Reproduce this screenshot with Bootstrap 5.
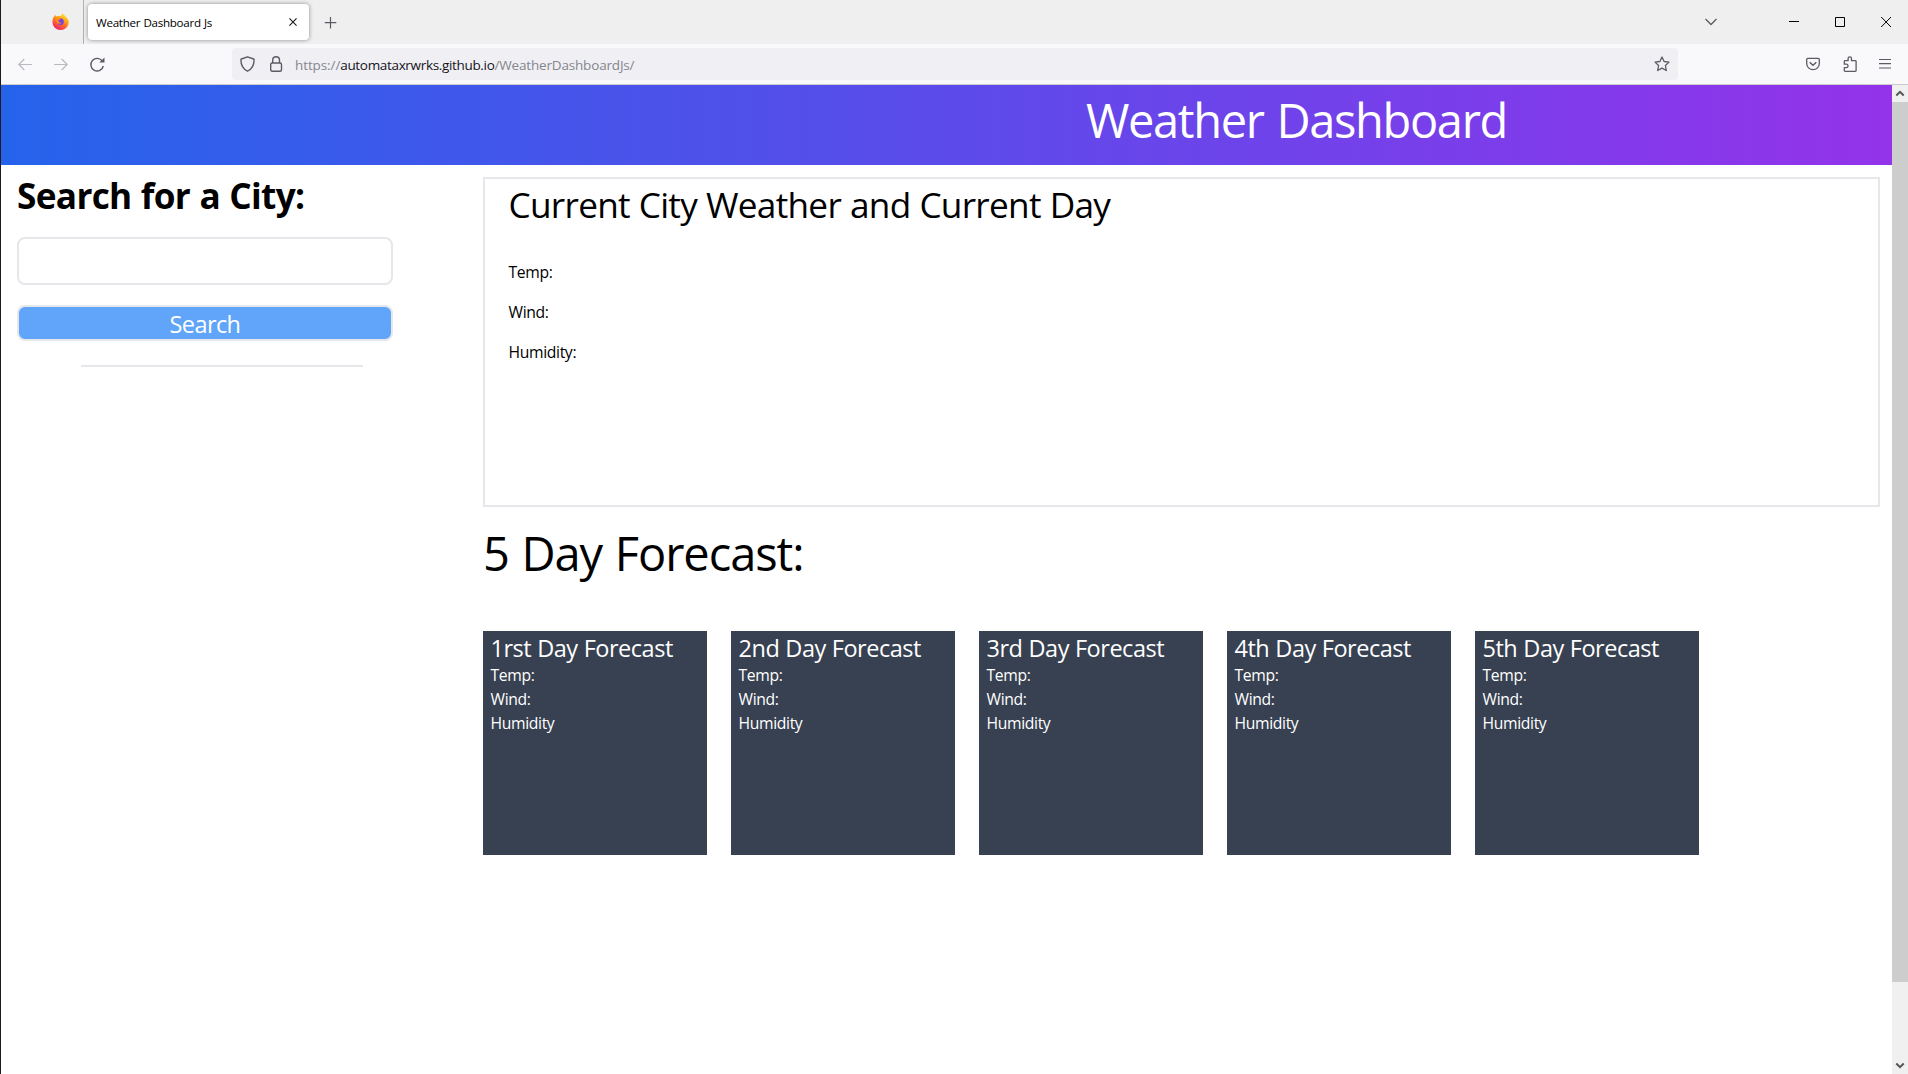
<!DOCTYPE html>
<html lang="en">
<head>
<meta charset="utf-8">
<title>Weather Dashboard Js</title>
<link href="https://cdn.jsdelivr.net/npm/bootstrap@5.3.0/dist/css/bootstrap.min.css" rel="stylesheet">
<style>
body{font-family:"Open Sans","Noto Sans",sans-serif;color:#000;background:#fff}
svg{display:block;flex:none;overflow:visible}
.app-window{height:1074px;border-left:1px solid #1b1b1f}
.tab-strip{height:44px;background:#efefef}
.pin-area{width:83px;border-right:1px solid #b0b0b0;padding:13px 0 0 51px}
.active-tab{width:221px;height:36px;margin:4px 0 0 4px;padding:0 12px 0 8px;border-radius:4px;box-shadow:0 0 4px rgba(0,0,0,.42);font-size:11.6px;letter-spacing:-.28px;word-spacing:.5px}
.active-tab span{padding-top:2px}
.tool-row{height:41px;background:#f9f9fb;border-bottom:1px solid #ccc}
.url-box{width:1446px;height:32px;margin-left:127px;background:#f0f0f4;border-radius:4px;padding:0 8px 0 8px;font-size:13.5px;color:#85858d}
.url-text{margin-left:13px;padding-top:2px}
.url-scheme{letter-spacing:-.1px}.url-host{color:#15141a;letter-spacing:-.33px}.url-path{letter-spacing:-.17px}
.page-head{height:80px;background:linear-gradient(to right,#2563eb,#9333ea);padding:11px 0 0 1085px}
.page-head h1,.forecast-title{font-size:47px;line-height:48px;font-weight:400}
.page-head h1{letter-spacing:-1.35px;word-spacing:2px}
.forecast-title{letter-spacing:-1.05px;word-spacing:1.5px;margin:22px 0 54px}
.side{width:482px;padding:10px 0 0 16px}
.side h2{font-size:35.2px;line-height:40px;font-weight:700;letter-spacing:-.68px;word-spacing:.8px;margin-bottom:22px}
.city-input,.search-btn,.search-btn:hover{width:376px;border:2px solid #e5e7eb;border-radius:8px}
.city-input{height:48px}
.search-btn,.search-btn:hover{height:36px;margin-top:20px;background:#60a5fa;color:#fff;font-size:23.5px;line-height:32px;letter-spacing:-.6px;padding:1px 0 0}
.rule{width:282px;height:2px;background:#e5e7eb;margin:24px 0 0 64px}
.current-box{width:1397px;height:330px;border:2px solid #e5e7eb;margin-top:12px;padding:5px 23.5px}
.current-box h2{font-size:35.2px;line-height:40px;font-weight:400;letter-spacing:-.72px;word-spacing:.5px;margin-bottom:36px}
.reading{font-size:15.7px;line-height:24px;letter-spacing:-.35px}
.day-tile{width:224px;height:224px;background:#374151;color:#fff;padding:1px 7.500px 0}
.day-tile h3{font-size:23.5px;line-height:32px;font-weight:400;letter-spacing:-.48px;word-spacing:.4px}
.day-tile h3 + .reading{margin-top:-1px}
.scroll-track{width:16px;background:#f0f0f0;padding:6px 0 5px}
.scroll-thumb{height:880px;background:#cdcdcd}
</style>
<script src="https://cdn.jsdelivr.net/npm/bootstrap@5.3.0/dist/js/bootstrap.bundle.min.js"></script>
</head>
<body class="overflow-hidden">
<div class="app-window d-flex flex-column">
  <div class="tab-strip d-flex">
    <div class="pin-area">
      <svg width="17" height="17" viewBox="0 0 16 16"><defs><linearGradient id="fx" x1=".8" y1=".1" x2=".3" y2="1"><stop offset="0" stop-color="#ffe226"/><stop offset=".45" stop-color="#ff8a16"/><stop offset="1" stop-color="#f5156c"/></linearGradient></defs><path d="M2 3.200 3 1.800l1.400 1.400 1.800-.6L8.600 3 9.600.2c1 1.100 2.200 1.600 3 3.200 1.600 1 3.200 3 3.200 5.200A7.700 7.400 0 0 1 .4 8.600C.4 6.200 1 4.400 2 3.200z" fill="url(#fx)"/><circle cx="8" cy="8.200" r="3.100" fill="#7542e5"/><path d="M3.500 5.200c1.500-.5 3 .1 4.400.3 0 1-1.700 1.200-1.900 1.700.2 1.500 1.500 2 3 1.500-1 2.300-4.500 1.900-5-.8z" fill="#ff8a16"/></svg>
    </div>
    <div class="active-tab bg-white d-flex align-items-center justify-content-between">
      <span>Weather Dashboard Js</span>
      <svg width="8" height="8" viewBox="0 0 9 9" stroke="#15141a" stroke-width="1.200"><path d="M.5.5l8 8M8.500.5l-8 8"/></svg>
    </div>
    <svg class="ms-3 mt-3" width="12" height="12" viewBox="0 0 12 12" stroke="#5b5b66" stroke-width="1.200"><path d="M5.500 1v11.500M-.2 6.700h11.500"/></svg>
    <div class="d-flex ms-auto" style="padding:16px 17px 0 0">
      <svg width="14" height="12" viewBox="0 0 14 12" fill="none" stroke="#5b5b66" stroke-width="1.300" style="margin-right:71px"><path d="M1.500 3 7 8.500 12.500 3"/></svg>
      <svg width="10" height="12" viewBox="0 0 10 12" stroke="#000" style="margin-right:36px"><path d="M0 5.500h10"/></svg>
      <svg width="10" height="12" viewBox="0 0 10 12" fill="none" stroke="#000" style="margin-right:36px"><path d="M.5 1.500h9v9h-9z"/></svg>
      <svg width="10" height="12" viewBox="0 0 10 12" stroke="#000"><path d="M.2 1l9.800 10M10 1 .2 11"/></svg>
    </div>
  </div>
  <div class="tool-row d-flex align-items-center">
    <svg style="margin-left:17px" width="14" height="12" viewBox="0 0 14 12" fill="none" stroke="#b9b9bf" stroke-width="1.200"><path d="M14 6.500H.8M6.300 1 .8 6.500 6.300 12"/></svg>
    <svg style="margin-left:22px" width="14" height="12" viewBox="0 0 14 12" fill="none" stroke="#b9b9bf" stroke-width="1.200"><path d="M0 6.500h13.200M7.700 1l5.500 5.500L7.700 12"/></svg>
    <svg style="margin-left:22px" width="15" height="15" viewBox="0 0 15 15" fill="none" stroke="#5b5b66" stroke-width="1.400"><path d="M12.400 4.200A6.300 6.300 0 1 0 13.300 9"/><path d="M14.500.6v5H9.300z" fill="#5b5b66" stroke="none"/></svg>
    <div class="url-box d-flex align-items-center">
      <svg width="15" height="16" viewBox="0 0 15 16" fill="none" stroke="#5b5b66" stroke-width="1.400"><path d="M7.500.8 13.600 3q.5.200.5.800c0 5-1.800 9.200-6.600 11.400C2.700 13 .9 8.800.9 3.800Q.9 3.200 1.400 3z" stroke-linejoin="round"/></svg>
      <svg style="margin-left:15px" width="12" height="16" viewBox="0 0 12 16" fill="none" stroke="#5b5b66" stroke-width="1.400"><rect x=".7" y="7" width="10.800" height="8.300" rx="1.500"/><path d="M2.700 7V4.200a3.400 3.400 0 0 1 6.800 0V7"/></svg>
      <div class="url-text text-nowrap"><span class="url-scheme">https://</span><span class="url-host">automataxrwrks.github.io</span><span class="url-path">/WeatherDashboardJs/</span></div>
      <svg class="ms-auto" width="16" height="16" viewBox="0 0 16 16" fill="none" stroke="#5b5b66" stroke-width="1.300" stroke-linejoin="round"><path d="M8 1l2.100 4.500 4.900.6-3.600 3.400.9 5L8 12.100l-4.300 2.400.9-5L1 6.100l4.900-.6z"/></svg>
    </div>
    <svg style="margin-left:128px" width="14" height="14" viewBox="0 0 14 14" fill="none" stroke="#5b5b66" stroke-width="1.300"><path d="M1.800 1.300h10.400q1.100 0 1.100 1.100v4a6.300 6.300 0 0 1-12.600 0v-4q0-1.100 1.100-1.100z"/><path d="M3.700 5.200 7 8.200l3.300-3" stroke-width="1.500"/></svg>
    <svg style="margin-left:22.500px" width="14" height="16" viewBox="0 0 14 16" fill="none" stroke="#5b5b66" stroke-width="1.300" stroke-linejoin="round"><path d="M1.300 8.200V5.500q0-.8.800-.8h3V2.500a1.700 1.700 0 0 1 3.400 0v2.200h3.800q.8 0 .8.800v9q0 .8-.8.800H2.100q-.8 0-.8-.8v-2.800h2a1.700 1.700 0 0 0 0-3.500z"/></svg>
    <svg style="margin-left:22.500px" width="12" height="12" viewBox="0 0 12 12" stroke="#5b5b66" stroke-width="1.200"><path d="M0 1.500h12M0 5.700h12M0 10h12"/></svg>
  </div>
  <div class="d-flex flex-grow-1">
    <main class="flex-grow-1">
      <header class="page-head text-white"><h1 class="m-0 text-nowrap">Weather Dashboard</h1></header>
      <div class="d-flex">
        <aside class="side flex-shrink-0">
          <h2>Search for a City:</h2>
          <input class="form-control city-input" type="text" aria-label="City">
          <button class="btn search-btn d-block" type="button">Search</button>
          <div class="rule"></div>
        </aside>
        <section>
          <div class="current-box">
            <h2>Current City Weather and Current Day</h2>
            <div class="d-flex flex-column gap-3 reading"><div>Temp:</div><div>Wind:</div><div>Humidity:</div></div>
          </div>
          <h2 class="forecast-title">5 Day Forecast:</h2>
          <div class="d-flex gap-4">
            <div class="day-tile"><h3 class="m-0 text-nowrap">1rst Day Forecast</h3><div class="reading">Temp:</div><div class="reading">Wind:</div><div class="reading">Humidity</div></div>
            <div class="day-tile"><h3 class="m-0 text-nowrap">2nd Day Forecast</h3><div class="reading">Temp:</div><div class="reading">Wind:</div><div class="reading">Humidity</div></div>
            <div class="day-tile"><h3 class="m-0 text-nowrap">3rd Day Forecast</h3><div class="reading">Temp:</div><div class="reading">Wind:</div><div class="reading">Humidity</div></div>
            <div class="day-tile"><h3 class="m-0 text-nowrap">4th Day Forecast</h3><div class="reading">Temp:</div><div class="reading">Wind:</div><div class="reading">Humidity</div></div>
            <div class="day-tile"><h3 class="m-0 text-nowrap">5th Day Forecast</h3><div class="reading">Temp:</div><div class="reading">Wind:</div><div class="reading">Humidity</div></div>
          </div>
        </section>
      </div>
    </main>
    <div class="scroll-track d-flex flex-column">
      <svg class="mx-auto" width="8" height="11" viewBox="0 0 8 11" fill="none" stroke="#555" stroke-width="2"><path d="M.3 4.500 4 .8l3.700 3.700"/></svg>
      <div class="scroll-thumb"></div>
      <svg class="mx-auto mt-auto" width="8" height="6" viewBox="0 0 8 6" fill="none" stroke="#555" stroke-width="2"><path d="M.3 .5 4 4.200 7.700.5"/></svg>
    </div>
  </div>
</div>
</body>
</html>
